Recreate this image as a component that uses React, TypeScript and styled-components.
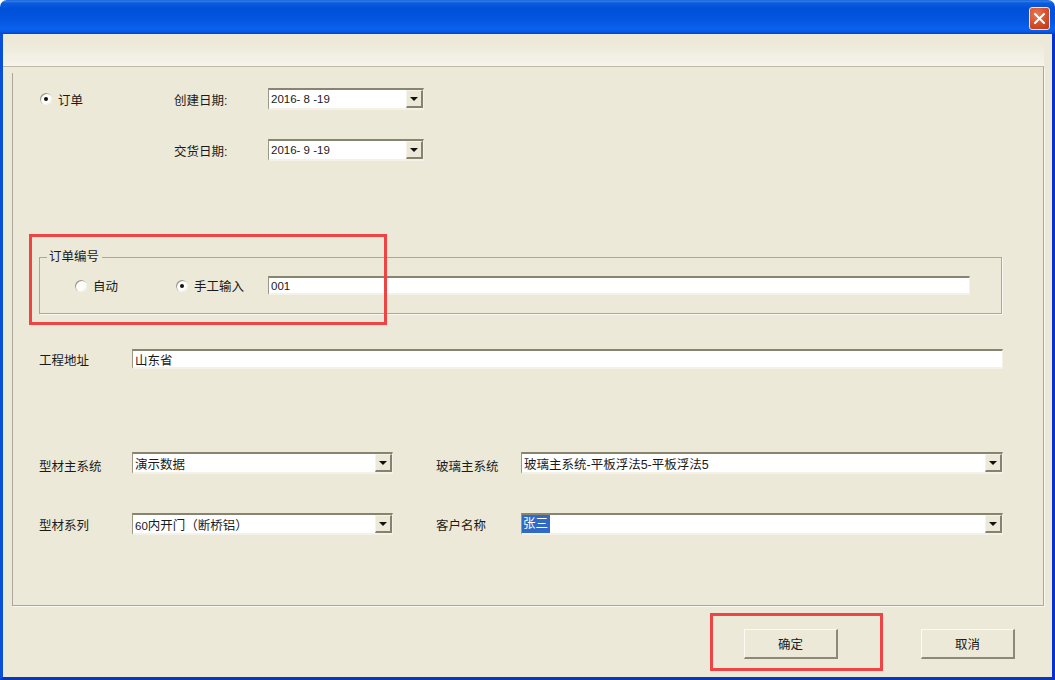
import styled, { createGlobalStyle } from 'styled-components';

const FACE = '#ECE9D8';
const ETCH = '#ACA899';

const GlobalStyle = createGlobalStyle`
    html, body {
        margin: 0;
        padding: 0;
        background: #fff;
        overflow: hidden;
    }
`;

const Window = styled.div`
    position: relative;
    box-sizing: border-box;
    width: 1055px;
    height: 680px;
    display: flex;
    flex-direction: column;
    font-family: 'Liberation Sans', 'Noto Sans CJK SC', sans-serif;
    font-size: 12.5px;
    color: #1a1a1a;
`;

const TitleBar = styled.div`
    flex: none;
    box-sizing: border-box;
    height: 34px;
    padding: 7px 5px 0 0;
    display: flex;
    justify-content: flex-end;
    align-items: flex-start;
    border-radius: 7px 7px 0 0;
    background: linear-gradient(
        to bottom,
        #0a5bd6 0,
        #3a80e6 1px,
        #0b5ce0 3px,
        #0050d8 9px,
        #0456e0 20px,
        #0a62ee 29px,
        #0658e2 32px,
        #0040c8 34px
    );
`;

const CloseButton = styled.div`
    box-sizing: border-box;
    width: 21px;
    height: 23px;
    border: 1px solid #e8e8e8;
    border-radius: 3px;
    display: flex;
    align-items: center;
    justify-content: center;
    background: radial-gradient(circle at 35% 30%, #e47a56 0, #d9552f 45%, #b93612 100%);
`;

const Body = styled.div`
    flex: 1;
    min-height: 0;
    display: flex;
    flex-direction: column;
    background: ${FACE};
    border-left: 3px solid #0a4fd8;
    border-right: 3px solid #0831c8;
    border-bottom: 3px solid #0838b8;
`;

const Strip = styled.div`
    flex: none;
    box-sizing: border-box;
    height: 33px;
    margin-right: 8px;
    border-bottom: 1px solid #bdbaa8;
    background: linear-gradient(to bottom, ${FACE} 0, ${FACE} 8px, #f6f4ec 100%);
`;

const Panel = styled.div`
    flex: none;
    box-sizing: border-box;
    height: 539px;
    margin: 0 8px 0 9px;
    padding: 21px 0 0 27px;
    border-right: 1px solid ${ETCH};
    border-bottom: 1px solid ${ETCH};
    box-shadow: 1px 1px 0 #f8f7f0;
    background: linear-gradient(${ETCH}, ${ETCH}) left 6px / 1px calc(100% - 6px) no-repeat;
`;

const DateRow = styled.div<{ $top?: number }>`
    display: flex;
    align-items: center;
    height: 22px;
    margin-top: ${(props) => props.$top ?? 0}px;
`;

const RadioSlot = styled.div`
    flex: none;
    width: 135px;
    padding-left: 1px;
    box-sizing: border-box;
`;

const DateLabel = styled.div`
    flex: none;
    width: 94px;
`;

const Choice = styled.div<{ $width?: number }>`
    flex: none;
    display: flex;
    align-items: center;
    gap: 6px;
    width: ${(props) => (props.$width ? `${props.$width}px` : 'auto')};
`;

const RadioMark = styled.span<{ $checked?: boolean }>`
    flex: none;
    width: 12px;
    height: 12px;
    border-radius: 50%;
    display: flex;
    align-items: center;
    justify-content: center;
    background: #fdfdfa;
    box-shadow: inset 1px 1px 0 #9c9a8c, inset -1px -1px 0 #f4f2e6;

    &::after {
        content: '';
        width: 4px;
        height: 4px;
        border-radius: 50%;
        background: ${(props) => (props.$checked ? '#111' : 'transparent')};
    }
`;

const Sunken = styled.div<{ $width: number; $height?: number }>`
    flex: none;
    box-sizing: border-box;
    width: ${(props) => props.$width}px;
    height: ${(props) => props.$height ?? 22}px;
    display: flex;
    align-items: center;
    padding-left: 2px;
    background: #fff;
    border-top: 2px solid #87846f;
    border-left: 1px solid #9a9784;
    border-right: 1px solid #f4f2e8;
    border-bottom: 2px solid #f4f2e8;
    white-space: pre;
    overflow: hidden;
`;

const ComboText = styled.span`
    flex: 1;
    min-width: 0;
`;

const Latin = styled.span`
    font-size: 11.5px;
`;

const ComboButton = styled.span`
    flex: none;
    box-sizing: border-box;
    width: 17px;
    height: 18px;
    display: flex;
    align-items: center;
    justify-content: center;
    background: ${FACE};
    border-top: 1px solid #f6f4ea;
    border-left: 1px solid #f6f4ea;
    border-right: 2px solid #85826f;
    border-bottom: 2px solid #85826f;

    &::after {
        content: '';
        border-left: 4px solid transparent;
        border-right: 4px solid transparent;
        border-top: 4px solid #111;
    }
`;

const Selected = styled.span`
    display: inline-block;
    margin-left: -2px;
    padding: 0 2px 0 1px;
    line-height: 18px;
    background: #316ac5;
    color: #fff;
`;

const GroupBox = styled.fieldset`
    box-sizing: border-box;
    width: 963px;
    height: 64px;
    margin: 89px 0 0;
    padding: 0;
    border: 1px solid ${ETCH};
    box-shadow: 1px 1px 0 #f8f7f0;
`;

const GroupTitle = styled.legend`
    margin-left: 7px;
    padding: 0 3px 0 2px;
    line-height: 14px;
`;

const GroupRow = styled.div`
    display: flex;
    align-items: center;
    height: 19px;
    margin-top: 12px;
    padding-left: 35px;
`;

const FormRow = styled.div<{ $top: number }>`
    display: flex;
    align-items: flex-start;
    margin-top: ${(props) => props.$top}px;
`;

const FieldLabel = styled.div<{ $width: number; $left?: number; $drop: number }>`
    flex: none;
    box-sizing: border-box;
    width: ${(props) => props.$width}px;
    height: 20px;
    margin-left: ${(props) => props.$left ?? 0}px;
    padding-top: ${(props) => props.$drop}px;
    line-height: 18px;
`;

const Footer = styled.div`
    display: flex;
    gap: 83px;
    padding: 23px 0 0 741px;
`;

const PushButton = styled.div`
    box-sizing: border-box;
    width: 94px;
    height: 30px;
    display: flex;
    align-items: center;
    justify-content: center;
    background: ${FACE};
    border-top: 1px solid #fbfaf4;
    border-left: 1px solid #fbfaf4;
    border-right: 2px solid #8c8976;
    border-bottom: 2px solid #8c8976;
`;

const Callout = styled.div<{ $x: number; $y: number; $w: number; $h: number }>`
    position: absolute;
    box-sizing: border-box;
    left: ${(props) => props.$x}px;
    top: ${(props) => props.$y}px;
    width: ${(props) => props.$w}px;
    height: ${(props) => props.$h}px;
    border: 3px solid #ee4444;
    pointer-events: none;
`;

const Radio = ({ checked, label, width }: { checked?: boolean; label: string; width?: number }) => (
    <Choice $width={width}>
        <RadioMark $checked={checked} />
        {label}
    </Choice>
);

const Combo = ({ width, children }: { width: number; children: React.ReactNode }) => (
    <Sunken $width={width}>
        <ComboText>{children}</ComboText>
        <ComboButton />
    </Sunken>
);

export default function App() {
    return (
        <>
            <GlobalStyle />
            <Window>
                <TitleBar>
                    <CloseButton>
                        <svg width="13" height="13" viewBox="0 0 13 13">
                            <path d="M2 2L11 11M11 2L2 11" stroke="#fff" strokeWidth="2" strokeLinecap="round" />
                        </svg>
                    </CloseButton>
                </TitleBar>
                <Body>
                    <Strip />
                    <Panel>
                        <DateRow>
                            <RadioSlot>
                                <Radio checked label="订单" />
                            </RadioSlot>
                            <DateLabel>创建日期:</DateLabel>
                            <Combo width={156}>
                                <Latin>2016- 8 -19</Latin>
                            </Combo>
                        </DateRow>
                        <DateRow $top={29}>
                            <RadioSlot />
                            <DateLabel>交货日期:</DateLabel>
                            <Combo width={156}>
                                <Latin>2016- 9 -19</Latin>
                            </Combo>
                        </DateRow>
                        <GroupBox>
                            <GroupTitle>订单编号</GroupTitle>
                            <GroupRow>
                                <Radio label="自动" width={101} />
                                <Radio checked label="手工输入" width={92} />
                                <Sunken $width={702} $height={19}>
                                    <Latin>001</Latin>
                                </Sunken>
                            </GroupRow>
                        </GroupBox>
                        <FormRow $top={35}>
                            <FieldLabel $width={93} $drop={3}>
                                工程地址
                            </FieldLabel>
                            <Sunken $width={871} $height={20}>
                                山东省
                            </Sunken>
                        </FormRow>
                        <FormRow $top={83}>
                            <FieldLabel $width={93} $drop={6}>
                                型材主系统
                            </FieldLabel>
                            <Combo width={261}>演示数据</Combo>
                            <FieldLabel $width={85} $left={43} $drop={6}>
                                玻璃主系统
                            </FieldLabel>
                            <Combo width={482}>玻璃主系统-平板浮法5-平板浮法5</Combo>
                        </FormRow>
                        <FormRow $top={39}>
                            <FieldLabel $width={93} $drop={4}>
                                型材系列
                            </FieldLabel>
                            <Combo width={261}>
                                <Latin>60</Latin>内开门（断桥铝）
                            </Combo>
                            <FieldLabel $width={85} $left={43} $drop={4}>
                                客户名称
                            </FieldLabel>
                            <Combo width={482}>
                                <Selected>张三</Selected>
                            </Combo>
                        </FormRow>
                    </Panel>
                    <Footer>
                        <PushButton>确定</PushButton>
                        <PushButton>取消</PushButton>
                    </Footer>
                </Body>
                <Callout $x={29} $y={234} $w={358} $h={91} />
                <Callout $x={710} $y={613} $w={173} $h={58} />
            </Window>
        </>
    );
}
